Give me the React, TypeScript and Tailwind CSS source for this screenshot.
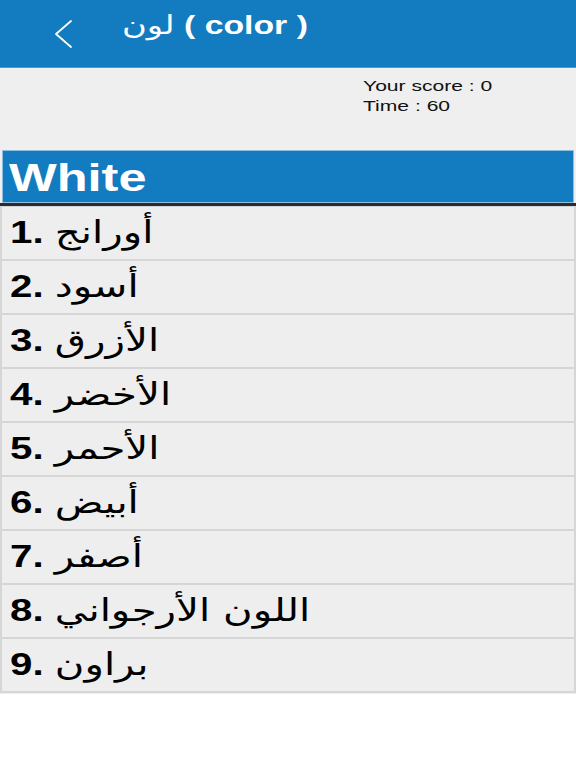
const colors = [
  "أورانج",
  "أسود",
  "الأزرق",
  "الأخضر",
  "الأحمر",
  "أبيض",
  "أصفر",
  "اللون الأرجواني",
  "براون",
];

const latin = "font-['Liberation_Sans','DejaVu_Sans',sans-serif]";

export default function App() {
  return (
    <div className={`min-h-[768px] w-[576px] overflow-hidden bg-white ${latin}`}>
      {/* Header */}
      <div className="flex h-[68px] items-center border-b border-[#4f9bd0] bg-[#137bc0]">
        <svg
          className="ml-[52px] h-[30px] w-[24px]"
          viewBox="0 0 24 30"
          fill="none"
          stroke="white"
          strokeWidth={1.8}
          strokeLinecap="round"
          strokeLinejoin="round"
        >
          <path d="M19 2L4 15L19 28" />
        </svg>
        <div className="ml-[46px] mb-[16px] w-fit origin-left scale-x-[1.3] whitespace-nowrap text-[26px] text-white">
          <span className="font-['DejaVu_Sans',sans-serif] font-normal">لون</span>
          <span className="font-bold"> ( color )</span>
        </div>
      </div>

      <div className="bg-[#efefef] pb-[1px]">
        {/* Score */}
        <div className="h-[82px] pl-[363px] pt-[8px] text-[15.5px] leading-[20px] text-[#111]">
          <div className="w-fit origin-left scale-x-[1.36] whitespace-nowrap">Your score : 0</div>
          <div className="w-fit origin-left scale-x-[1.36] whitespace-nowrap">Time : 60</div>
        </div>

        {/* Question */}
        <div className="px-[2px]">
          <div className="flex h-[53px] items-center border border-[#8fbfe0] bg-[#137bc0] pl-[6px]">
            <span className="mt-[4px] w-fit origin-left scale-x-[1.33] text-[38px] font-bold text-white">White</span>
          </div>
        </div>
        <div className="h-[3px] bg-[#2b2b2b]" />

        {/* Answers */}
        <div className="flex flex-col gap-[2px] bg-[#d6d6d6] p-[2px] pt-[1px]">
          {colors.map((name, i) => (
            <div key={i} className="flex h-[52px] items-center bg-[#eeeeee] pl-[8px]">
              <div className="w-fit origin-left scale-x-[1.3] whitespace-nowrap text-[31px] text-black" dir="ltr">
                <span className="font-bold">{i + 1}.</span>{" "}
                <span className="font-['DejaVu_Sans',sans-serif] font-normal">{name}</span>
              </div>
            </div>
          ))}
        </div>
      </div>
    </div>
  );
}
